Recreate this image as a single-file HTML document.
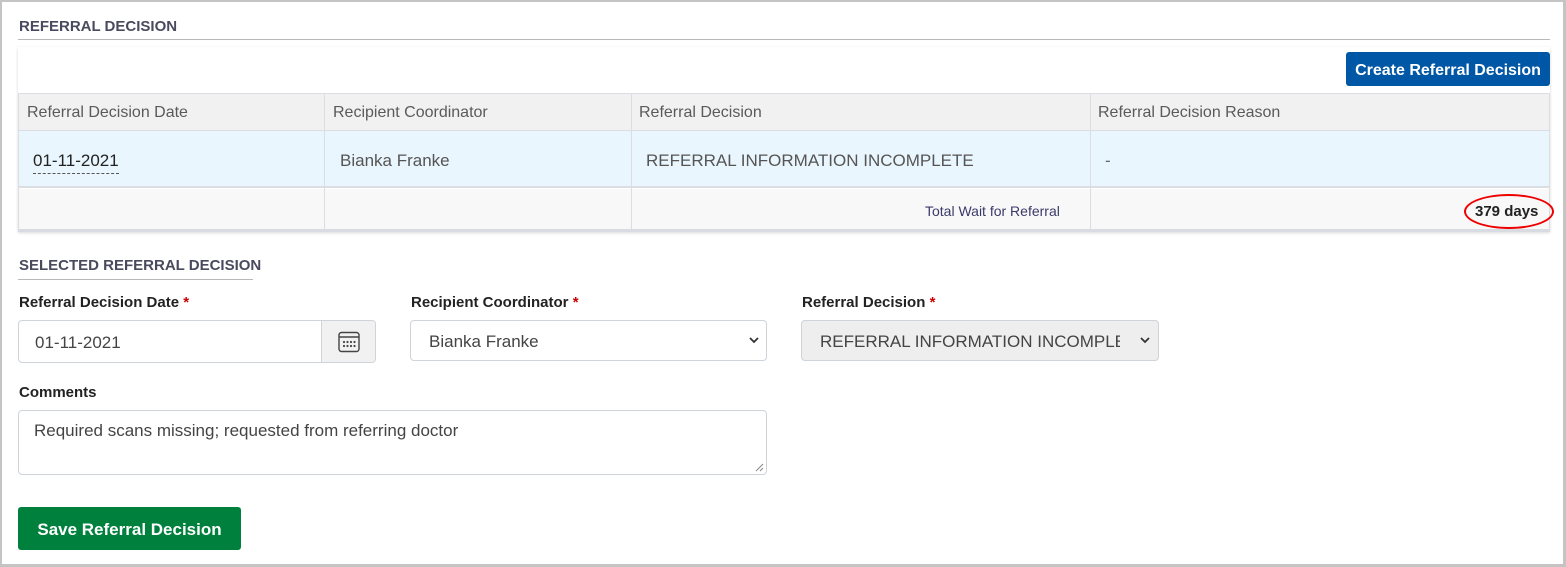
<!DOCTYPE html>
<html><head><style>
*{box-sizing:border-box;margin:0;padding:0}
body{width:1566px;height:567px;position:relative;font-family:"Liberation Sans",sans-serif;background:#fff;overflow:hidden}
.frame{position:absolute;left:0;top:0;width:1566px;height:567px;border:2px solid #c4c4c4;border-right-width:3px;border-bottom-width:3px}
.a{position:absolute}
.h{font-weight:bold;font-size:15px;color:#4a4a5e}
.lbl{font-weight:bold;font-size:15px;color:#222}
.lbl b{color:#c00}
.inp{position:absolute;border:1px solid #ced4da;border-radius:4px;font-size:17px;color:#444;display:flex;align-items:center;padding-left:16px;padding-top:2px}
</style></head><body>
<div class="frame"></div>
<div class="a h" style="left:19px;top:18px">REFERRAL DECISION</div>
<div class="a" style="left:18px;top:39px;width:1532px;height:1px;background:#b8b8bc"></div>
<div class="a" style="left:18px;top:47px;width:1532px;height:185px;box-shadow:0 1px 3px rgba(0,0,0,.15)"></div>
<div class="a" style="left:1346px;top:52px;width:204px;height:34px;background:#0057a6;border-radius:3px;color:#fff;font-weight:bold;font-size:16px;display:flex;align-items:center;justify-content:center;padding-top:3px">Create Referral Decision</div>
<div class="a" style="left:18px;top:93px;width:1532px;height:38px;background:#f1f1f1;border-top:1px solid #dcdde3;border-bottom:1px solid #dcdde3"></div>
<div class="a" style="left:18px;top:131px;width:1532px;height:57px;background:#eaf6fd;border-bottom:2px solid #dcdde3"></div>
<div class="a" style="left:18px;top:189px;width:1532px;height:43px;background:#f8f8f8;border-bottom:3px solid #d9dbe3"></div>
<div class="a" style="left:18px;top:93px;width:1px;height:138px;background:#dcdde3"></div>
<div class="a" style="left:1549px;top:93px;width:1px;height:138px;background:#dcdde3"></div>
<div class="a" style="left:324px;top:93px;width:1px;height:137px;background:#dcdde3"></div>
<div class="a" style="left:631px;top:93px;width:1px;height:137px;background:#dcdde3"></div>
<div class="a" style="left:1090px;top:93px;width:1px;height:137px;background:#dcdde3"></div>
<div class="a" style="left:27px;top:104px;font-size:16px;color:#5a5a5a">Referral Decision Date</div>
<div class="a" style="left:333px;top:104px;font-size:16px;color:#5a5a5a">Recipient Coordinator</div>
<div class="a" style="left:639px;top:104px;font-size:16px;color:#5a5a5a">Referral Decision</div>
<div class="a" style="left:1098px;top:104px;font-size:16px;color:#5a5a5a">Referral Decision Reason</div>
<div class="a" style="left:33px;top:151px;font-size:17px;color:#222;border-bottom:1px dashed #555;padding-bottom:2px">01-11-2021</div>
<div class="a" style="left:340px;top:151px;font-size:17px;color:#555">Bianka Franke</div>
<div class="a" style="left:646px;top:151px;font-size:17px;color:#555">REFERRAL INFORMATION INCOMPLETE</div>
<div class="a" style="left:1105px;top:151px;font-size:17px;color:#666">-</div>
<div class="a" style="left:925px;top:203px;font-size:14px;color:#3a3a6a">Total Wait for Referral</div>
<div class="a" style="left:1475px;top:203px;font-size:15px;font-weight:bold;color:#222">379 days</div>
<div class="a" style="left:1464px;top:194px;width:90px;height:35px;border:2px solid #e00;border-radius:50%"></div>
<div class="a h" style="left:19px;top:257px">SELECTED REFERRAL DECISION</div>
<div class="a" style="left:18px;top:279px;width:235px;height:1px;background:#b8b8bc"></div>
<div class="a lbl" style="left:19px;top:294px">Referral Decision Date <b>*</b></div>
<div class="a lbl" style="left:411px;top:294px">Recipient Coordinator <b>*</b></div>
<div class="a lbl" style="left:802px;top:294px">Referral Decision <b>*</b></div>
<div class="inp" style="left:18px;top:320px;width:358px;height:43px">01-11-2021</div>
<div class="a" style="left:321px;top:321px;width:54px;height:41px;background:#f1f1f1;border-left:1px solid #ced4da;border-radius:0 4px 4px 0;display:flex;align-items:center;justify-content:center">
<svg width="22" height="22" viewBox="0 0 22 22" fill="none" stroke="#444" stroke-width="1.4"><rect x="1" y="1.5" width="20" height="19" rx="2.5"/><line x1="1" y1="6" x2="21" y2="6"/><g fill="#444" stroke="none"><circle cx="6" cy="11" r="1.1"/><circle cx="9.5" cy="11" r="1.1"/><circle cx="13" cy="11" r="1.1"/><circle cx="16.5" cy="11" r="1.1"/><circle cx="6" cy="15" r="1.1"/><circle cx="9.5" cy="15" r="1.1"/><circle cx="13" cy="15" r="1.1"/><circle cx="16.5" cy="15" r="1.1"/></g></svg></div>
<div class="inp" style="left:410px;top:320px;width:357px;height:41px;padding-left:18px">Bianka Franke</div>
<svg class="a" style="left:748px;top:335px" width="12" height="10" viewBox="0 0 12 10"><path d="M2 3l4 4 4-4" stroke="#333" stroke-width="1.8" fill="none"/></svg>
<div class="inp" style="left:801px;top:320px;width:358px;height:41px;background:#eeeeee;padding-left:18px;overflow:hidden;white-space:nowrap"><span style="width:300px;overflow:hidden;display:block">REFERRAL INFORMATION INCOMPLETE</span></div>
<svg class="a" style="left:1139px;top:335px" width="12" height="10" viewBox="0 0 12 10"><path d="M2 3l4 4 4-4" stroke="#333" stroke-width="1.8" fill="none"/></svg>
<div class="a lbl" style="left:19px;top:384px">Comments</div>
<div class="inp" style="left:18px;top:410px;width:749px;height:65px;align-items:flex-start;padding-top:10px;padding-left:15px">Required scans missing; requested from referring doctor</div>
<svg class="a" style="left:754px;top:462px" width="10" height="10"><path d="M9 2L2 9M9 6L6 9" stroke="#888" stroke-width="1"/></svg>
<div class="a" style="left:18px;top:507px;width:223px;height:43px;background:#00803d;border-radius:3px;color:#fff;font-weight:bold;font-size:17px;display:flex;align-items:center;justify-content:center;padding-top:2px">Save Referral Decision</div>
</body></html>
